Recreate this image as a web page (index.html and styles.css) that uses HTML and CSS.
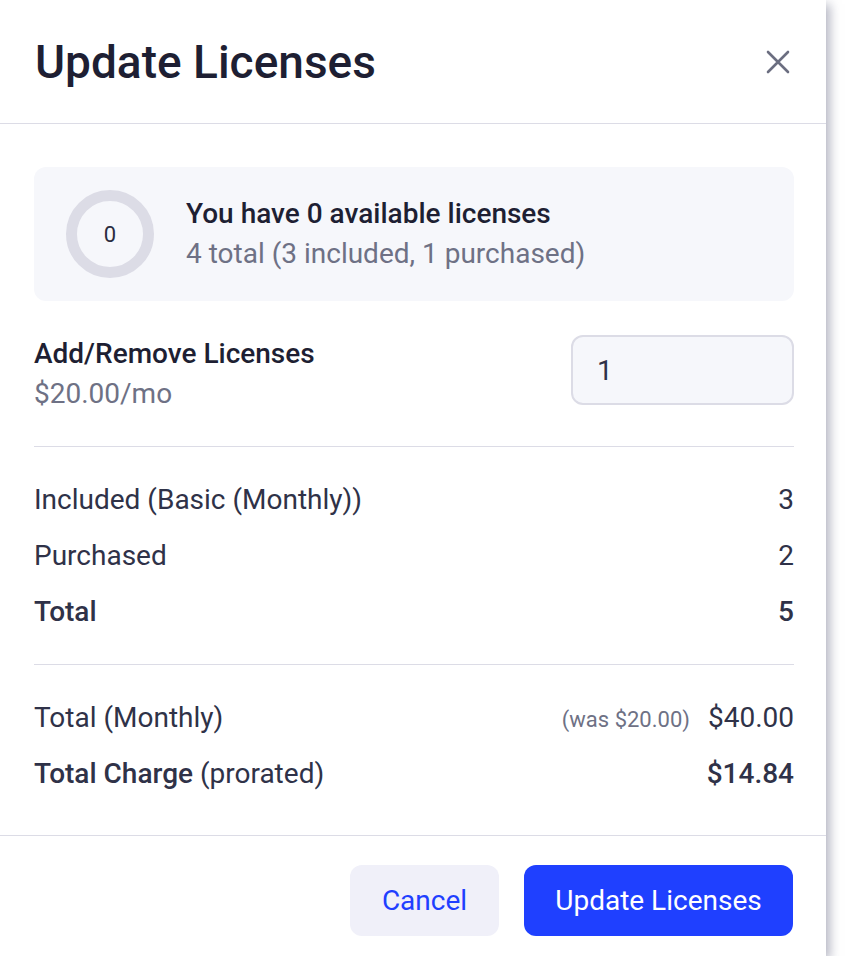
FILE: index.html
```html
<!DOCTYPE html>
<html>
<head>
  <title>Update Licenses</title>
  <link rel="stylesheet" href="styles.css">
</head>
<body>

  <div class="modal">
    <header class="modal-head">
      <h1 class="modal-title">Update Licenses</h1>
      <button class="close" aria-label="Close">
        <svg width="26" height="26" viewBox="0 0 26 26">
          <path d="M3 3 L23 23 M23 3 L3 23" stroke="#6b6e80" stroke-width="2.6" stroke-linecap="round" fill="none"/>
        </svg>
      </button>
    </header>

    <div class="modal-body">
      <div class="summary">
        <div class="ring">0</div>
        <div class="summary-text">
          <div class="summary-main">You have 0 available licenses</div>
          <div class="summary-sub">4 total (3 included, 1 purchased)</div>
        </div>
      </div>

      <div class="edit-row">
        <div class="edit-label">
          <div class="edit-title">Add/Remove Licenses</div>
          <div class="edit-price">$20.00/mo</div>
        </div>
        <input class="qty" type="text" value="1">
      </div>

      <div class="lines">
        <div class="line"><span>Included (Basic (Monthly))</span><span>3</span></div>
        <div class="line"><span>Purchased</span><span>2</span></div>
        <div class="line bold"><span>Total</span><span>5</span></div>
      </div>

      <div class="lines last">
        <div class="line">
          <span>Total (Monthly)</span>
          <span><span class="was">(was $20.00)</span>$40.00</span>
        </div>
        <div class="line">
          <span><b>Total Charge</b> (prorated)</span>
          <b>$14.84</b>
        </div>
      </div>
    </div>

    <footer class="modal-foot">
      <button class="btn btn-light">Cancel</button>
      <button class="btn btn-primary">Update Licenses</button>
    </footer>
  </div>

</body>
</html>
```

FILE: styles.css
```css
body {
  margin: 0;
  background: #fff;
  font-family: Roboto, "Liberation Sans", sans-serif;
  color: #2f3248;
}

.modal {
  width: 826px;
  height: 956px;
  background: #fff;
  box-shadow: 4px 4px 10px rgba(120, 122, 145, 0.55);
  display: flex;
  flex-direction: column;
}

.modal-head {
  height: 123px;
  border-bottom: 1px solid #dcdce6;
  display: flex;
  align-items: center;
  justify-content: space-between;
  padding: 0 35px 0 35px;
}

.modal-title {
  margin: 0;
  font-size: 46px;
  font-weight: 500;
  color: #1e1f33;
}

.close {
  background: none;
  border: none;
  padding: 0;
  width: 26px;
  height: 26px;
  cursor: pointer;
}

.modal-body {
  flex: 1;
  padding: 43px 32px 0 34px;
}

.summary {
  height: 134px;
  background: #f6f7fb;
  border-radius: 12px;
  display: flex;
  align-items: center;
  padding: 0 32px;
  gap: 32px;
}

.ring {
  width: 88px;
  height: 88px;
  box-sizing: border-box;
  border: 11px solid #dcdce6;
  border-radius: 50%;
  display: flex;
  align-items: center;
  justify-content: center;
  font-size: 22px;
  color: #2a2c40;
}

.summary-text {
  font-size: 28px;
  line-height: 40px;
}

.summary-main {
  font-weight: 500;
  color: #1e1f33;
}

.summary-sub {
  color: #6e7185;
}

.edit-row {
  display: flex;
  justify-content: space-between;
  margin-top: 33px;
  height: 80px;
}

.edit-label {
  font-size: 28px;
  line-height: 40px;
}

.edit-title {
  font-weight: 500;
  color: #1e1f33;
}

.edit-price {
  color: #6e7185;
}

.qty {
  width: 223px;
  height: 70px;
  box-sizing: border-box;
  margin-top: 1px;
  border: 2px solid #dcdce6;
  border-radius: 12px;
  background: #f6f7fb;
  padding: 0 24px;
  font-family: Roboto, sans-serif;
  font-size: 28px;
  color: #2f3248;
}

.lines {
  border-top: 1px solid #dcdce6;
  margin-top: 32px;
  padding-top: 24px;
  padding-bottom: 25px;
}

.lines.last {
  margin-top: 0;
  padding-bottom: 0;
}

.line {
  display: flex;
  justify-content: space-between;
  align-items: center;
  height: 56px;
  font-size: 28px;
}

.line.bold,
.line b {
  font-weight: 500;
}

.was {
  font-size: 22px;
  color: #6e7185;
  margin-right: 18px;
}

.modal-foot {
  border-top: 1px solid #dcdce6;
  padding: 29px 33px 20px 0;
  display: flex;
  justify-content: flex-end;
  gap: 25px;
}

.btn {
  height: 71px;
  border: none;
  border-radius: 12px;
  font-family: Roboto, sans-serif;
  font-size: 28px;
  cursor: pointer;
}

.btn-light {
  width: 149px;
  background: #f0f0f9;
  color: #1f3fff;
}

.btn-primary {
  width: 269px;
  background: #1f40ff;
  color: #fff;
}
```
